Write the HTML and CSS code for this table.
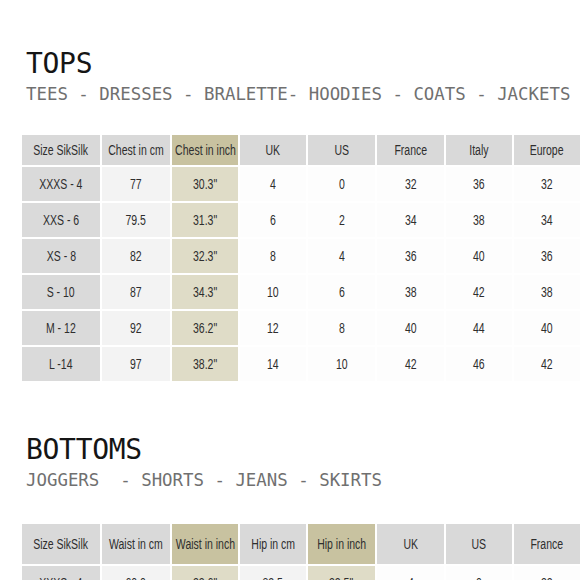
FILE: index.html
```html
<!DOCTYPE html>
<html>
<head>
<meta charset="utf-8">
<link rel="stylesheet" href="styles.css">
</head>
<body>
<section class="section tops">
  <h1 class="title">TOPS</h1>
  <p class="subtitle">TEES - DRESSES - BRALETTE- HOODIES - COATS - JACKETS</p>
  <div class="chart chart-tops">
    <div class="cell head"><span>Size SikSilk</span></div>
    <div class="cell head"><span>Chest in cm</span></div>
    <div class="cell head tan"><span>Chest in inch</span></div>
    <div class="cell head"><span>UK</span></div>
    <div class="cell head"><span>US</span></div>
    <div class="cell head"><span>France</span></div>
    <div class="cell head"><span>Italy</span></div>
    <div class="cell head"><span>Europe</span></div>

    <div class="cell size"><span>XXXS - 4</span></div>
    <div class="cell light"><span>77</span></div>
    <div class="cell tanlight"><span>30.3"</span></div>
    <div class="cell"><span>4</span></div>
    <div class="cell"><span>0</span></div>
    <div class="cell"><span>32</span></div>
    <div class="cell"><span>36</span></div>
    <div class="cell"><span>32</span></div>

    <div class="cell size"><span>XXS - 6</span></div>
    <div class="cell light"><span>79.5</span></div>
    <div class="cell tanlight"><span>31.3"</span></div>
    <div class="cell"><span>6</span></div>
    <div class="cell"><span>2</span></div>
    <div class="cell"><span>34</span></div>
    <div class="cell"><span>38</span></div>
    <div class="cell"><span>34</span></div>

    <div class="cell size"><span>XS - 8</span></div>
    <div class="cell light"><span>82</span></div>
    <div class="cell tanlight"><span>32.3"</span></div>
    <div class="cell"><span>8</span></div>
    <div class="cell"><span>4</span></div>
    <div class="cell"><span>36</span></div>
    <div class="cell"><span>40</span></div>
    <div class="cell"><span>36</span></div>

    <div class="cell size"><span>S - 10</span></div>
    <div class="cell light"><span>87</span></div>
    <div class="cell tanlight"><span>34.3"</span></div>
    <div class="cell"><span>10</span></div>
    <div class="cell"><span>6</span></div>
    <div class="cell"><span>38</span></div>
    <div class="cell"><span>42</span></div>
    <div class="cell"><span>38</span></div>

    <div class="cell size"><span>M - 12</span></div>
    <div class="cell light"><span>92</span></div>
    <div class="cell tanlight"><span>36.2"</span></div>
    <div class="cell"><span>12</span></div>
    <div class="cell"><span>8</span></div>
    <div class="cell"><span>40</span></div>
    <div class="cell"><span>44</span></div>
    <div class="cell"><span>40</span></div>

    <div class="cell size"><span>L -14</span></div>
    <div class="cell light"><span>97</span></div>
    <div class="cell tanlight"><span>38.2"</span></div>
    <div class="cell"><span>14</span></div>
    <div class="cell"><span>10</span></div>
    <div class="cell"><span>42</span></div>
    <div class="cell"><span>46</span></div>
    <div class="cell"><span>42</span></div>
  </div>
</section>

<section class="section bottoms">
  <h1 class="title">BOTTOMS</h1>
  <p class="subtitle">JOGGERS&nbsp; - SHORTS - JEANS - SKIRTS</p>
  <div class="chart chart-bottoms">
    <div class="cell head"><span>Size SikSilk</span></div>
    <div class="cell head"><span>Waist in cm</span></div>
    <div class="cell head tan"><span>Waist in inch</span></div>
    <div class="cell head"><span>Hip in cm</span></div>
    <div class="cell head tan"><span>Hip in inch</span></div>
    <div class="cell head"><span>UK</span></div>
    <div class="cell head"><span>US</span></div>
    <div class="cell head"><span>France</span></div>

    <div class="cell size"><span>XXXS - 4</span></div>
    <div class="cell light"><span>60.0</span></div>
    <div class="cell tanlight"><span>23.6"</span></div>
    <div class="cell light"><span>82.5</span></div>
    <div class="cell tanlight"><span>32.5"</span></div>
    <div class="cell"><span>4</span></div>
    <div class="cell"><span>0</span></div>
    <div class="cell"><span>32</span></div>
  </div>
</section>
</body>
</html>
```

FILE: styles.css
```css
html, body {
  margin: 0;
  padding: 0;
  background: #ffffff;
  overflow: hidden;
}

body {
  width: 580px;
  height: 580px;
}

.section {
  padding-left: 22px;
}

.tops {
  padding-top: 48px;
}

.bottoms {
  padding-top: 53px;
}

.title {
  margin: 0 0 0 4px;
  font-family: "DejaVu Sans Mono", "Liberation Mono", monospace;
  font-weight: normal;
  font-size: 28px;
  line-height: 32px;
  color: #151515;
  letter-spacing: -0.3px;
}

.subtitle {
  margin: 4px 0 0 4px;
  font-family: "DejaVu Sans Mono", "Liberation Mono", monospace;
  font-size: 17.4px;
  line-height: 20px;
  color: #707070;
  white-space: pre;
}

.chart {
  display: grid;
  grid-template-columns: 78px 68px 66px 66px 67px 67px 66px 66px;
  column-gap: 2px;
  row-gap: 2px;
  background: #ffffff;
  width: max-content;
}

.chart-tops {
  margin-top: 31px;
  grid-template-rows: 30px repeat(6, 34px);
}

.chart-bottoms {
  margin-top: 34px;
  grid-template-rows: 40px 34px;
}

.cell {
  display: flex;
  align-items: center;
  justify-content: center;
  background: #fdfdfd;
  font-family: "Liberation Sans", Arial, sans-serif;
  font-size: 14px;
  color: #2e2e2e;
}

.cell span {
  display: inline-block;
  transform: scaleX(0.75);
  white-space: nowrap;
}

.head {
  background: #d9d9d9;
}

.head.tan {
  background: #c8c2a0;
}

.size {
  background: #dadada;
}

.light {
  background: #f3f3f3;
}

.tanlight {
  background: #dfdcc7;
}
```
